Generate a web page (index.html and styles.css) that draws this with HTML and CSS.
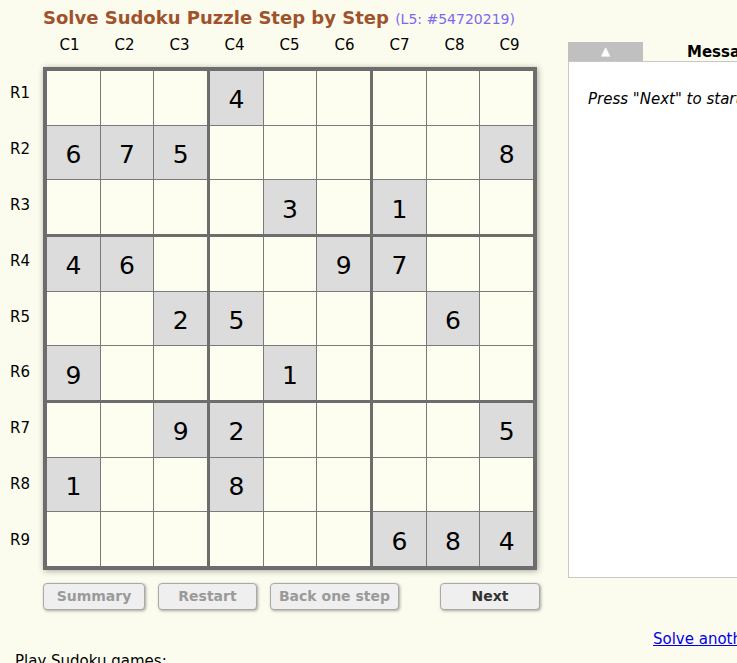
FILE: index.html
```html
<!DOCTYPE html>
<html>
<head>
<meta charset="utf-8">
<title>Solve Sudoku Puzzle Step by Step</title>
<link rel="stylesheet" href="styles.css">
</head>
<body>
<div class="page">
  <div class="left">
    <h1 class="title">Solve Sudoku Puzzle Step by Step <span class="level">(L5: #54720219)</span></h1>
    <div class="board-area">
      <div class="corner"></div>
      <div class="col-labels">
        <span>C1</span><span>C2</span><span>C3</span><span>C4</span><span>C5</span><span>C6</span><span>C7</span><span>C8</span><span>C9</span>
      </div>
      <div class="row-labels">
        <span>R1</span><span>R2</span><span>R3</span><span>R4</span><span>R5</span><span>R6</span><span>R7</span><span>R8</span><span>R9</span>
      </div>
      <div class="board">
        <div class="box">
          <div class="cell"></div><div class="cell"></div><div class="cell"></div>
          <div class="cell given">6</div><div class="cell given">7</div><div class="cell given">5</div>
          <div class="cell"></div><div class="cell"></div><div class="cell"></div>
        </div>
        <div class="box">
          <div class="cell given">4</div><div class="cell"></div><div class="cell"></div>
          <div class="cell"></div><div class="cell"></div><div class="cell"></div>
          <div class="cell"></div><div class="cell given">3</div><div class="cell"></div>
        </div>
        <div class="box">
          <div class="cell"></div><div class="cell"></div><div class="cell"></div>
          <div class="cell"></div><div class="cell"></div><div class="cell given">8</div>
          <div class="cell given">1</div><div class="cell"></div><div class="cell"></div>
        </div>
        <div class="box">
          <div class="cell given">4</div><div class="cell given">6</div><div class="cell"></div>
          <div class="cell"></div><div class="cell"></div><div class="cell given">2</div>
          <div class="cell given">9</div><div class="cell"></div><div class="cell"></div>
        </div>
        <div class="box">
          <div class="cell"></div><div class="cell"></div><div class="cell given">9</div>
          <div class="cell given">5</div><div class="cell"></div><div class="cell"></div>
          <div class="cell"></div><div class="cell given">1</div><div class="cell"></div>
        </div>
        <div class="box">
          <div class="cell given">7</div><div class="cell"></div><div class="cell"></div>
          <div class="cell"></div><div class="cell given">6</div><div class="cell"></div>
          <div class="cell"></div><div class="cell"></div><div class="cell"></div>
        </div>
        <div class="box">
          <div class="cell"></div><div class="cell"></div><div class="cell given">9</div>
          <div class="cell given">1</div><div class="cell"></div><div class="cell"></div>
          <div class="cell"></div><div class="cell"></div><div class="cell"></div>
        </div>
        <div class="box">
          <div class="cell given">2</div><div class="cell"></div><div class="cell"></div>
          <div class="cell given">8</div><div class="cell"></div><div class="cell"></div>
          <div class="cell"></div><div class="cell"></div><div class="cell"></div>
        </div>
        <div class="box">
          <div class="cell"></div><div class="cell"></div><div class="cell given">5</div>
          <div class="cell"></div><div class="cell"></div><div class="cell"></div>
          <div class="cell given">6</div><div class="cell given">8</div><div class="cell given">4</div>
        </div>
      </div>
    </div>
    <div class="buttons">
      <button class="btn btn-summary" disabled>Summary</button>
      <button class="btn btn-restart" disabled>Restart</button>
      <button class="btn btn-back" disabled>Back one step</button>
      <button class="btn btn-next">Next</button>
    </div>
  </div>
  <div class="panel">
    <div class="panel-head">
      <div class="tab">&#9650;</div>
      <div class="panel-title">Messages</div>
    </div>
    <div class="panel-body">
      <p class="hint">Press "Next" to start solving the puzzle step by step.</p>
    </div>
  </div>
</div>
<div class="footer">
  <p class="another"><a href="#">Solve another Sudoku puzzle</a></p>
  <p class="play">Play Sudoku games:</p>
</div>
</body>
</html>
```

FILE: styles.css
```css
html, body {
  margin: 0;
  padding: 0;
  background: #fcfcee;
  font-family: "DejaVu Sans", Verdana, sans-serif;
  color: #000;
}

.page {
  display: flex;
  align-items: flex-start;
  width: 900px;
}

.left {
  width: 568px;
  flex: none;
}

.title {
  margin: 0;
  padding: 7px 0 0 43px;
  height: 23px;
  font-size: 18px;
  line-height: 22px;
  font-weight: bold;
  color: #a0522d;
  white-space: nowrap;
}

.level {
  font-size: 14px;
  font-weight: normal;
  color: #7b68ee;
}

.board-area {
  display: grid;
  grid-template-columns: 43px 494px;
  grid-template-rows: 37px 503px;
}

.col-labels {
  display: grid;
  grid-template-columns: repeat(9, 55px);
  margin-left: -1px;
  align-items: start;
  padding-top: 6px;
  font-size: 15px;
  line-height: 18px;
}

.col-labels span {
  text-align: center;
}

.row-labels {
  display: flex;
  flex-direction: column;
  padding-left: 10px;
  font-size: 15px;
}

.row-labels span {
  height: 56px;
  line-height: 52px;
}

.board {
  display: grid;
  grid-template-columns: repeat(3, 1fr);
  grid-template-rows: repeat(3, 1fr);
  gap: 3px;
  background: #6d6d6d;
  border: 4px solid #6d6d6d;
  box-shadow: 1px 1px 6px rgba(0, 0, 0, 0.35);
}

.box {
  display: grid;
  grid-template-columns: repeat(3, 1fr);
  grid-template-rows: repeat(3, 1fr);
  gap: 1px;
  background: #7a7a7a;
}

.cell {
  background: #fdfdf0;
  display: flex;
  align-items: center;
  justify-content: center;
  font-size: 25px;
  padding-top: 4px;
  box-sizing: border-box;
}

.cell.given {
  background: #dcdcdc;
}

.buttons {
  display: flex;
  gap: 13px;
  padding: 13px 0 0 43px;
}

.btn {
  height: 27px;
  border: 1px solid #a9a9a9;
  border-radius: 4px;
  background: #efefef;
  box-shadow: 1px 1px 3px rgba(0, 0, 0, 0.35);
  font-family: "DejaVu Sans", Verdana, sans-serif;
  font-size: 14px;
  font-weight: bold;
  color: #333;
  padding: 0 0 1px 0;
}

.btn:disabled {
  color: #9a9a9a;
}

.btn-summary { width: 102px; }
.btn-restart { width: 99px; }
.btn-back { width: 129px; }
.btn-next { width: 100px; margin-left: 28px; }

.panel {
  margin-top: 42px;
  width: 320px;
  flex: none;
}

.panel-head {
  display: flex;
  align-items: center;
  height: 19px;
}

.tab {
  width: 75px;
  height: 19px;
  background: #c0c0c0;
  color: #fff;
  font-size: 12px;
  line-height: 19px;
  text-align: center;
}

.panel-title {
  margin-left: 44px;
  font-size: 15px;
  font-weight: bold;
}

.panel-body {
  height: 515px;
  background: #fff;
  border: 1px solid #c8c8c8;
}

.hint {
  margin: 0;
  padding: 28px 0 0 19px;
  font-size: 15px;
  font-style: italic;
  white-space: nowrap;
}

.footer {
  width: 900px;
}

.another {
  margin: 20px 0 0 653px;
  font-size: 15px;
  white-space: nowrap;
}

.another a {
  color: #0000ee;
}

.play {
  margin: 4px 0 0 15px;
  font-size: 15px;
}
```
